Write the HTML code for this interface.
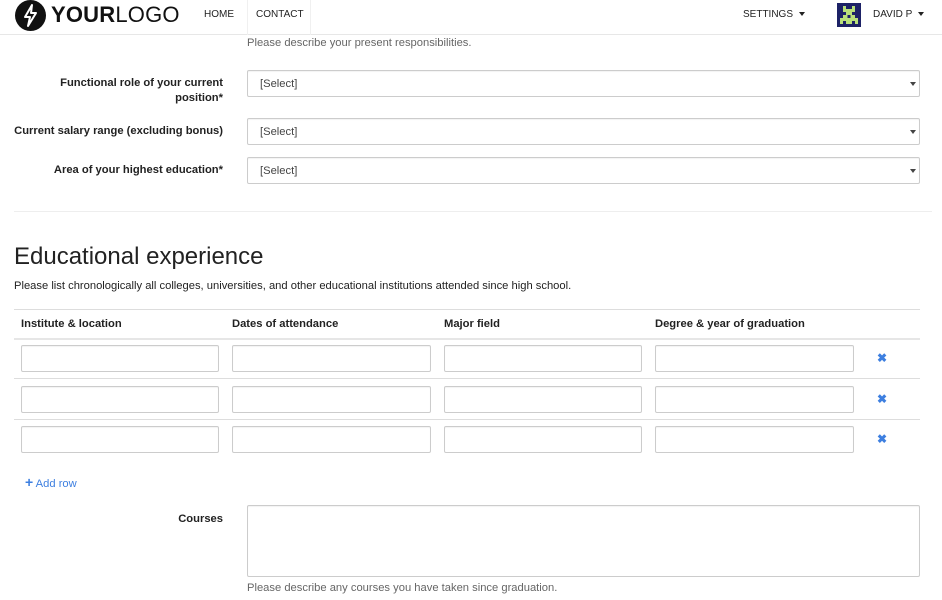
<!DOCTYPE html>
<html><head><meta charset="utf-8"><style>
*{box-sizing:border-box;margin:0;padding:0}
body{width:942px;height:600px;overflow:hidden;background:#fff;font-family:"Liberation Sans",sans-serif;color:#333;font-size:11.2px;position:relative}
.a{position:absolute}
.hdr{left:0;top:0;width:942px;height:35px;border-bottom:1px solid #e7e7e7;background:#fff}
.nav{font-size:10px;color:#222}
.lbl{font-weight:bold;font-size:11.2px;color:#222;text-align:right;width:223px;left:0;line-height:15px;white-space:nowrap}
.sel{left:247px;width:673px;height:27px;border:1px solid #ccc;border-radius:2px;font-size:11.2px;color:#444;padding:7px 12px;box-shadow:inset 0 1px 1px rgba(0,0,0,.05)}
.sel:after{content:"";position:absolute;right:3px;top:11px;border-left:3px solid transparent;border-right:3px solid transparent;border-top:4px solid #444}
.help{left:247px;color:#666;font-size:11.2px}
.line{left:14px;width:906px;height:1px;background:#ddd}
.th{font-weight:bold;font-size:11.2px;color:#222;top:318px}
.in{height:27px;border:1px solid #ccc;border-radius:2px;box-shadow:inset 0 1px 1px rgba(0,0,0,.05)}
.x{color:#3d7fe0;font-size:12px;font-weight:bold;left:877px}
</style></head><body>
<div class="a hdr"></div>
<svg class="a" style="left:15px;top:0" width="31" height="31" viewBox="0 0 31 31"><circle cx="15.5" cy="15.5" r="15.5" fill="#111"/><path d="M17 5 L10 17 H15 L13 26 L21 13 H16 Z" fill="none" stroke="#fff" stroke-width="2" stroke-linejoin="round"/></svg>
<div class="a" style="left:51px;top:3px;font-size:22px;letter-spacing:0.2px;color:#111;line-height:24px"><b style="font-weight:900">YOUR</b><span style="font-weight:300">LOGO</span></div>
<div class="a nav" style="left:204px;top:9px">HOME</div>
<div class="a" style="left:247px;top:0;width:64px;height:35px;border-left:1px solid #f0f0f0;border-right:1px solid #f0f0f0"></div>
<div class="a nav" style="left:256px;top:9px">CONTACT</div>
<div class="a nav" style="left:743px;top:9px">SETTINGS&nbsp; <span style="display:inline-block;border-left:3px solid transparent;border-right:3px solid transparent;border-top:4px solid #222;vertical-align:middle"></span></div>
<svg class="a" style="left:837px;top:3px" width="24" height="24" viewBox="0 0 8 8" shape-rendering="crispEdges"><rect width="8" height="8" fill="#1d2266"/><path d="M2 1h1v1h2V1h1v2H5v1h1v1h1v2H6V6H5v1H3V6H2v1H1V5h1V4h1V3H2z" fill="#b9e07a"/><rect x="3.5" y="4" width="1" height="1" fill="#1d2266"/></svg>
<div class="a nav" style="left:873px;top:9px">DAVID P&nbsp; <span style="display:inline-block;border-left:3px solid transparent;border-right:3px solid transparent;border-top:4px solid #222;vertical-align:middle"></span></div>

<div class="a help" style="top:37px">Please describe your present responsibilities.</div>
<div class="a lbl" style="top:76px">Functional role of your current<br>position*</div>
<div class="a sel" style="top:70px">[Select]</div>
<div class="a lbl" style="top:124px">Current salary range (excluding bonus)</div>
<div class="a sel" style="top:118px">[Select]</div>
<div class="a lbl" style="top:163px">Area of your highest education*</div>
<div class="a sel" style="top:157px">[Select]</div>
<div class="a" style="left:14px;top:211px;width:918px;height:1px;background:#eee"></div>
<div class="a" style="left:14px;top:243px;font-size:24px;color:#222">Educational experience</div>
<div class="a" style="left:14px;top:280px;color:#222">Please list chronologically all colleges, universities, and other educational institutions attended since high school.</div>
<div class="a line" style="top:309px"></div>
<div class="a th" style="left:21px">Institute &amp; location</div>
<div class="a th" style="left:232px">Dates of attendance</div>
<div class="a th" style="left:444px">Major field</div>
<div class="a th" style="left:655px">Degree &amp; year of graduation</div>
<div class="a line" style="top:338px;height:2px;background:#e6e6e6"></div>
<div class="a line" style="top:378px"></div>
<div class="a line" style="top:419px"></div>
<div class="a in" style="left:21px;top:345px;width:198px"></div><div class="a in" style="left:232px;top:345px;width:199px"></div><div class="a in" style="left:444px;top:345px;width:198px"></div><div class="a in" style="left:655px;top:345px;width:199px"></div>
<div class="a in" style="left:21px;top:386px;width:198px"></div><div class="a in" style="left:232px;top:386px;width:199px"></div><div class="a in" style="left:444px;top:386px;width:198px"></div><div class="a in" style="left:655px;top:386px;width:199px"></div>
<div class="a in" style="left:21px;top:426px;width:198px"></div><div class="a in" style="left:232px;top:426px;width:199px"></div><div class="a in" style="left:444px;top:426px;width:198px"></div><div class="a in" style="left:655px;top:426px;width:199px"></div>
<div class="a x" style="top:351px">✖</div>
<div class="a x" style="top:392px">✖</div>
<div class="a x" style="top:432px">✖</div>
<div class="a" style="left:25px;top:474px;color:#3d7fe0"><b style="font-size:14px">+</b> Add row</div>
<div class="a lbl" style="top:512px">Courses</div>
<div class="a in" style="left:247px;top:505px;width:673px;height:72px"></div>
<div class="a help" style="top:582px">Please describe any courses you have taken since graduation.</div>
</body></html>
